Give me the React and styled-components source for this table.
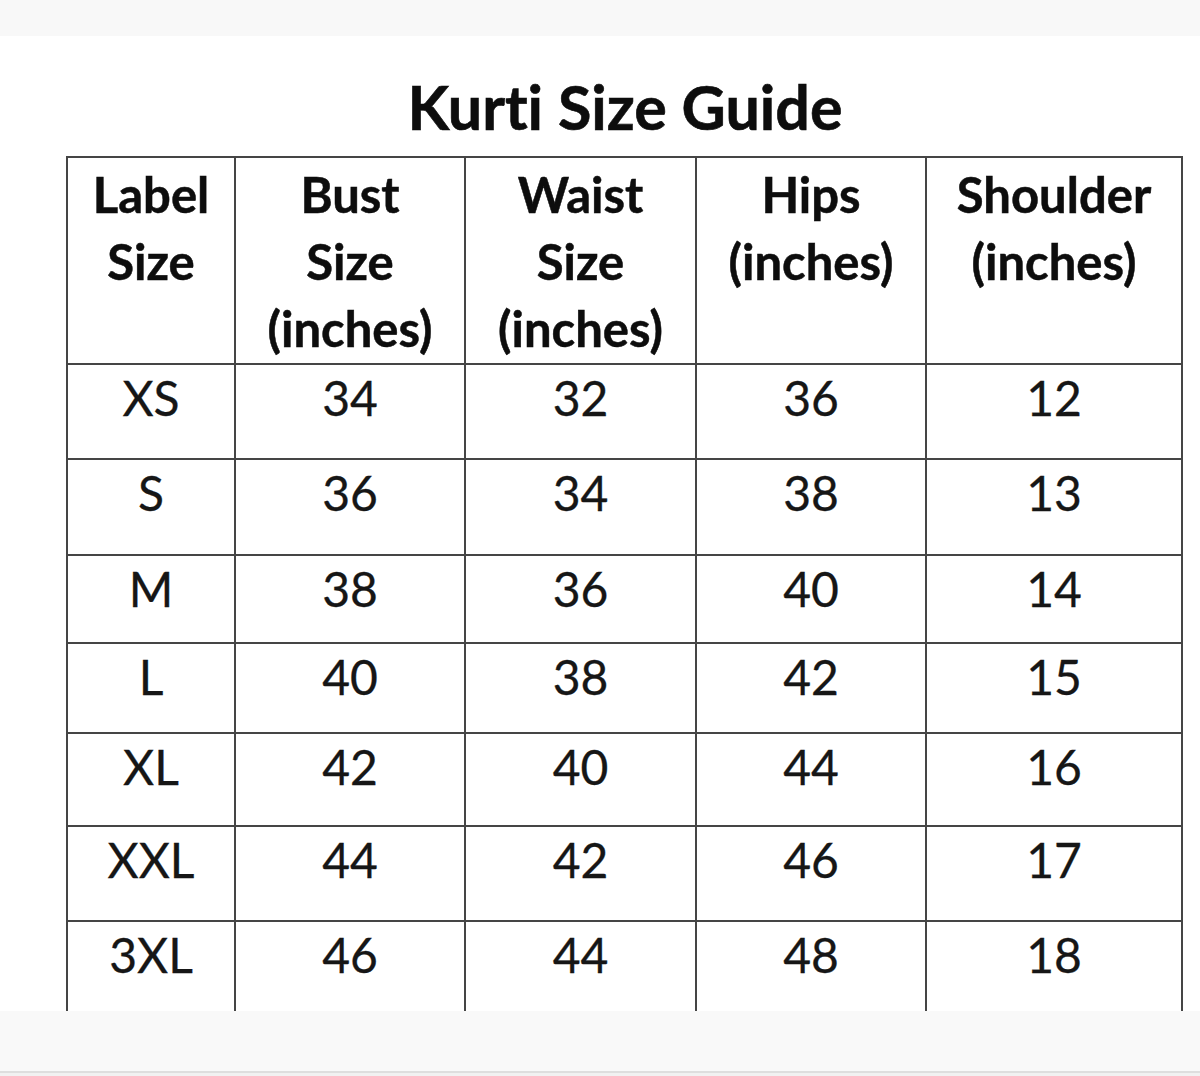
import React from "react";
import styled, { createGlobalStyle } from "styled-components";

const GlobalStyle = createGlobalStyle`
    html, body {
        margin: 0;
        padding: 0;
        background: #ffffff;
    }
    body {
        font-family: Lato, "Open Sans", sans-serif;
        font-variant-ligatures: none;
        color: #141414;
    }
`;

const columns = [
    { label: ["Label", "Size"], width: 168 },
    { label: ["Bust", "Size", "(inches)"], width: 230 },
    { label: ["Waist", "Size", "(inches)"], width: 231 },
    { label: ["Hips", "(inches)"], width: 230 },
    { label: ["Shoulder", "(inches)"], width: 256 },
];

// row heights follow the source image, lines are not evenly spaced
const rows = [
    { cells: ["XS", "34", "32", "36", "12"], height: 95 },
    { cells: ["S", "36", "34", "38", "13"], height: 96 },
    { cells: ["M", "38", "36", "40", "14"], height: 88 },
    { cells: ["L", "40", "38", "42", "15"], height: 90 },
    { cells: ["XL", "42", "40", "44", "16"], height: 93 },
    { cells: ["XXL", "44", "42", "46", "17"], height: 95 },
    { cells: ["3XL", "46", "44", "48", "18"], height: 95 },
];

const SizeGuide = () => {
    return (
        <Page>
            <GlobalStyle />
            <TopBand />
            <Canvas>
                <Title>Kurti Size Guide</Title>
                <Table $cols={columns.map((c) => `${c.width}px`).join(" ")}>
                    {columns.map((col, i) => (
                        <HeadCell key={`h-${i}`}>
                            {col.label.map((line, j) => (
                                <div key={j}>{line}</div>
                            ))}
                        </HeadCell>
                    ))}
                    {rows.map((row, r) =>
                        row.cells.map((value, c) => (
                            <Cell key={`${r}-${c}`} $height={row.height}>
                                {value}
                            </Cell>
                        ))
                    )}
                </Table>
            </Canvas>
            <BottomBand />
        </Page>
    );
};

export default SizeGuide;

// styles
const Page = styled.div`
    width: 1200px;
    height: 1076px;
    display: flex;
    flex-direction: column;
    overflow: hidden;
    background: #ffffff;
`;

const TopBand = styled.div`
    height: 36px;
    flex-shrink: 0;
    background: #f8f8f8;
`;

const Canvas = styled.div`
    height: 975px;
    flex-shrink: 0;
    overflow: hidden;
    background: #ffffff;
    display: flex;
    flex-direction: column;
`;

const Title = styled.h1`
    margin: 34px 0 0 0;
    font-family: Lato, sans-serif;
    font-variant-ligatures: none;
    font-weight: 700;
    font-size: 61px;
    line-height: 74px;
    text-align: center;
    color: #0d0d0d;
    padding-left: 50px;
    -webkit-text-stroke: 0.6px #0d0d0d;
`;

const Table = styled.div`
    margin: 12px 0 0 66px;
    display: grid;
    grid-template-columns: ${(p) => p.$cols};
    width: max-content;
    border-left: 2px solid #454545;
    border-top: 2px solid #454545;
`;

const HeadCell = styled.div`
    height: 207px;
    box-sizing: border-box;
    padding-top: 3px;
    border-right: 2px solid #454545;
    border-bottom: 2px solid #454545;
    text-align: center;
    font-family: Lato, sans-serif;
    font-weight: 700;
    font-size: 49px;
    line-height: 67px;
    color: #0d0d0d;
    -webkit-text-stroke: 0.5px #0d0d0d;
`;

const Cell = styled.div`
    height: ${(p) => p.$height}px;
    box-sizing: border-box;
    padding-top: 4px;
    border-right: 2px solid #454545;
    border-bottom: 2px solid #454545;
    text-align: center;
    font-family: Lato, sans-serif;
    font-weight: 400;
    font-size: 48px;
    line-height: 1.2;
    color: #161616;
    -webkit-text-stroke: 0.3px #161616;
`;

const BottomBand = styled.div`
    flex: 1;
    background: #f9f9f9;
    border-bottom: 3px solid #f1f1f1;
    box-shadow: inset 0 -4px 0 -2px #dedede;
`;
